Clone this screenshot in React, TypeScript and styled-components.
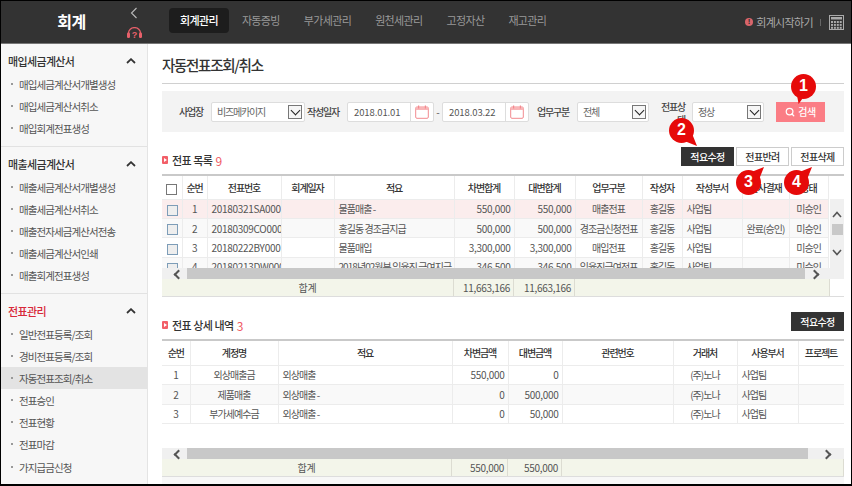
import React from "react";
import styled, { createGlobalStyle } from "styled-components";
import { Search } from "lucide-react";

const GlobalStyle = createGlobalStyle`
  html, body {
    margin: 0;
    padding: 0;
    background: #fff;
  }
  * {
    box-sizing: border-box;
  }
  body {
    font-family: "Noto Sans CJK KR", "Noto Sans", sans-serif;
    font-size: 10px;
    color: #444;
  }
`;

type Align = "left" | "center" | "right";

const sideMenus = [
  {
    title: "매입세금계산서",
    items: ["매입세금계산서개별생성", "매입세금계산서취소", "매입회계전표생성"],
  },
  {
    title: "매출세금계산서",
    items: [
      "매출세금계산서개별생성",
      "매출세금계산서취소",
      "매출전자세금계산서전송",
      "매출세금계산서인쇄",
      "매출회계전표생성",
    ],
  },
  {
    title: "전표관리",
    red: true,
    items: [
      "일반전표등록/조회",
      "경비전표등록/조회",
      "자동전표조회/취소",
      "전표승인",
      "전표현황",
      "전표마감",
      "가지급금신청",
    ],
  },
];

const navItems = ["회계관리", "자동증빙", "부가세관리", "원천세관리", "고정자산", "재고관리"];

const listCols = [20, 25, 74, 53, 120, 60, 61, 67, 40, 60, 47, 39];
const listHead = ["", "순번", "전표번호", "회계일자", "적요", "차변합계", "대변합계", "업무구분", "작성자", "작성부서", "인사결재", "상태"];
const listAlign: Align[] = ["center", "left", "center", "left", "right", "right", "center", "center", "left", "center", "center"];
const listRows = [
  ["1", "20180321SA0001", "", "물품매출 -", "550,000", "550,000", "매출전표", "홍길동", "사업팀", "", "미승인"],
  ["2", "20180309CO0001", "", "홍길동 경조금지급", "500,000", "500,000", "경조금신청전표", "홍길동", "사업팀", "완료(승인)", "미승인"],
  ["3", "20180222BY0001", "", "물품매입", "3,300,000", "3,300,000", "매입전표", "홍길동", "사업팀", "", "미승인"],
  ["4", "20180213DW0001", "", "2018년02월분 임율직 급여지급", "346,500", "346,500", "임율직급여전표", "홍길동", "사업팀", "", "미승인"],
];

const detailCols = [28, 88, 174, 56, 54, 111, 64, 61, 46];
const detailHead = ["순번", "계정명", "적요", "차변금액", "대변금액", "관련번호", "거래처", "사용부서", "프로젝트"];
const detailAlign: Align[] = ["center", "center", "left", "right", "right", "center", "center", "left", "left"];
const detailRows = [
  ["1", "외상매출금", "외상매출", "550,000", "0", "", "(주)노나", "사업팀", ""],
  ["2", "제품매출", "외상매출 -", "0", "500,000", "", "(주)노나", "사업팀", ""],
  ["3", "부가세예수금", "외상매출 -", "0", "50,000", "", "(주)노나", "사업팀", ""],
];

const hasHangul = (value: string) => /[가-힣]/.test(value);

const DateField = ({ value, ml }: { value: string; ml: number }) => (
  <DateWrap $ml={ml}>
    <DateInput>{value}</DateInput>
    <CalendarButton>
      <svg width="14" height="14" viewBox="0 0 14 14">
        <rect x="0.7" y="2" width="12.6" height="11.3" rx="1.2" fill="#fff" stroke="#f28a8f" />
        <rect x="0.7" y="2" width="12.6" height="3" fill="#f9b5b7" />
        <rect x="3" y="0.5" width="1.2" height="3" fill="#f28a8f" />
        <rect x="9.8" y="0.5" width="1.2" height="3" fill="#f28a8f" />
      </svg>
    </CalendarButton>
  </DateWrap>
);

const App = () => {
  return (
    <>
      <GlobalStyle />
      <Page>
        <Header>
          <Brand>회계</Brand>
          <BrandTools>
            <svg width="8" height="12" viewBox="0 0 8 12">
              <path d="M6.5 1 L1.5 6 L6.5 11" fill="none" stroke="#bbb" strokeWidth="1.1" />
            </svg>
            <svg width="15" height="11" viewBox="0 0 15 11">
              <path d="M1.5 7 V6 A6 5.4 0 0 1 13.5 6 V7" fill="none" stroke="#e8606a" strokeWidth="1.3" />
              <rect x="0" y="5.5" width="3" height="5.5" rx="1.2" fill="#e8606a" />
              <rect x="12" y="5.5" width="3" height="5.5" rx="1.2" fill="#e8606a" />
              <text x="7.5" y="10.5" textAnchor="middle" fontSize="9" fontWeight="700" fill="#e8606a" fontFamily="Liberation Sans">?</text>
            </svg>
          </BrandTools>
          <Nav>
            {navItems.map((item, i) => (
              <NavTab key={item} $active={i === 0}>
                {item}
              </NavTab>
            ))}
          </Nav>
          <HeaderRight>
            <AlertDot>!</AlertDot>
            <StartLink>회계시작하기</StartLink>
            <HeaderDivider />
            <svg width="15" height="15" viewBox="0 0 15 15">
              <rect x="0.5" y="0.5" width="14" height="14" fill="none" stroke="#aaa" />
              <rect x="2" y="2" width="11" height="2.5" fill="#aaa" />
              {[0, 1, 2].map((r) =>
                [0, 1, 2, 3].map((c) => (
                  <rect key={`${r}-${c}`} x={2 + c * 2.9} y={6 + r * 2.9} width="2" height="2" fill="#aaa" />
                )),
              )}
            </svg>
          </HeaderRight>
        </Header>

        <Body>
          <Sidebar>
            {sideMenus.map((menu) => (
              <SideSection key={menu.title}>
                <SideTitle $red={menu.red}>
                  {menu.title}
                  <svg width="10" height="6" viewBox="0 0 10 6">
                    <path d="M1 5 L5 1.2 L9 5" fill="none" stroke="#333" strokeWidth="1.8" />
                  </svg>
                </SideTitle>
                {menu.items.map((item) => (
                  <SideItem key={item} $active={item === "자동전표조회/취소"}>
                    {item}
                  </SideItem>
                ))}
              </SideSection>
            ))}
          </Sidebar>

          <Main>
            <PageTitle>자동전표조회/취소</PageTitle>

            <SearchBar>
              <FieldLabel $ml={17}>사업장</FieldLabel>
              <SelectBox $w={94} $ml={8}>
                비즈메카이지
                <SelectArrow />
              </SelectBox>
              <FieldLabel $ml={2}>작성일자</FieldLabel>
              <DateField value="2018.01.01" ml={8} />
              <DateDash>-</DateDash>
              <DateField value="2018.03.22" ml={0} />
              <FieldLabel $ml={8}>업무구분</FieldLabel>
              <SelectBox $w={72} $ml={8}>
                전체
                <SelectArrow />
              </SelectBox>
              <WrappedLabel>전표상태</WrappedLabel>
              <SelectBox $w={72} $ml={7}>
                정상
                <SelectArrow />
              </SelectBox>
              <SearchButton>
                <Search size={10} strokeWidth={3} />
                검색
              </SearchButton>
            </SearchBar>

            <SectionHead>
              <SectionTitle>
                <SectionMark />
                전표 목록 <Count>9</Count>
              </SectionTitle>
              <ButtonRow>
                <ActionButton $dark>적요수정</ActionButton>
                <ActionButton>전표반려</ActionButton>
                <ActionButton>전표삭제</ActionButton>
              </ButtonRow>
            </SectionHead>

            <GridFrame>
              <ListViewport>
                <DataTable $width={666}>
                  <colgroup>
                    {listCols.map((w, i) => (
                      <col key={i} width={w} />
                    ))}
                  </colgroup>
                  <thead>
                    <tr>
                      {listHead.map((h, i) => (
                        <HeadCell key={i} $h={23}>
                          {i === 0 ? <CheckBox /> : h}
                        </HeadCell>
                      ))}
                    </tr>
                  </thead>
                  <tbody>
                    {listRows.map((row, r) => (
                      <BodyRow key={r} $tone={r === 0 ? "picked" : r % 2 ? "odd" : "even"}>
                        <Cell $h={19.4}>
                          <CheckBox $row />
                        </Cell>
                        {row.map((value, c) => (
                          <Cell key={c} $h={19.4} $align={listAlign[c]} $hangul={hasHangul(value)}>
                            {value}
                          </Cell>
                        ))}
                      </BodyRow>
                    ))}
                  </tbody>
                </DataTable>
              </ListViewport>
              <VerticalBar>
                <svg width="10" height="7" viewBox="0 0 10 7">
                  <path d="M1 6 L5 1.5 L9 6" fill="none" stroke="#555" strokeWidth="1.6" />
                </svg>
                <VerticalThumb />
                <svg width="10" height="7" viewBox="0 0 10 7">
                  <path d="M1 1 L5 5.5 L9 1" fill="none" stroke="#555" strokeWidth="1.6" />
                </svg>
              </VerticalBar>
              <HorizontalBar $thumbStop={39} $arrowRight={26} />
            </GridFrame>
            <TotalRow $cols="292px 60px 61px 255px">
              <TotalCell $center>합계</TotalCell>
              <TotalCell>11,663,166</TotalCell>
              <TotalCell>11,663,166</TotalCell>
              <TotalCell />
            </TotalRow>

            <SectionHead>
              <SectionTitle>
                <SectionMark />
                전표 상세 내역 <Count>3</Count>
              </SectionTitle>
              <ButtonRow>
                <ActionButton $dark>적요수정</ActionButton>
              </ButtonRow>
            </SectionHead>

            <DetailViewport>
              <DataTable $width={682}>
                <colgroup>
                  {detailCols.map((w, i) => (
                    <col key={i} width={w} />
                  ))}
                </colgroup>
                <thead>
                  <tr>
                    {detailHead.map((h) => (
                      <HeadCell key={h} $h={24}>
                        {h}
                      </HeadCell>
                    ))}
                  </tr>
                </thead>
                <tbody>
                  {detailRows.map((row, r) => (
                    <BodyRow key={r} $tone={r % 2 ? "odd" : "even"}>
                      {row.map((value, c) => (
                        <Cell key={c} $h={19.6} $align={detailAlign[c]} $hangul={hasHangul(value)}>
                          {value}
                        </Cell>
                      ))}
                    </BodyRow>
                  ))}
                </tbody>
              </DataTable>
            </DetailViewport>
            <HorizontalBar $thumbStop={36} $arrowRight={14} />
            <TotalRow $cols="290px 56px 54px 282px">
              <TotalCell $center>합계</TotalCell>
              <TotalCell>550,000</TotalCell>
              <TotalCell>550,000</TotalCell>
              <TotalCell />
            </TotalRow>
            <BottomStrip />
          </Main>
        </Body>

        <Callout $x={790} $y={73} $tail="bottom">1</Callout>
        <Callout $x={668} $y={117} $tail="downRight">2</Callout>
        <Callout $x={735} $y={169} $tail="upRight">3</Callout>
        <Callout $x={783} $y={169} $tail="upRight">4</Callout>
      </Page>
    </>
  );
};

export default App;

const Page = styled.div`
  position: relative;
  width: 852px;
  height: 486px;
  overflow: hidden;
  background: #fff;
  border: 1px solid #000;
  border-bottom-width: 2px;
  display: flex;
  flex-direction: column;
`;

const Header = styled.header`
  flex: none;
  height: 43px;
  display: flex;
  align-items: center;
  background: #333;
  border-bottom: 1px solid #777;
`;

const Brand = styled.div`
  width: 121px;
  padding-left: 20px;
  margin-top: -2px;
  text-align: center;
  font-size: 16px;
  font-weight: 700;
  color: #fff;
  letter-spacing: -0.5px;
`;

const BrandTools = styled.div`
  width: 24px;
  height: 42px;
  display: flex;
  flex-direction: column;
  align-items: center;
  justify-content: space-between;
  padding: 6px 0 5px;
`;

const Nav = styled.nav`
  display: flex;
  gap: 2px;
  margin: -3px 0 0 23px;
`;

const NavTab = styled.div<{ $active?: boolean }>`
  height: 25px;
  line-height: 24px;
  padding: 0 11px;
  border-radius: 4px;
  font-size: 11px;
  letter-spacing: -0.65px;
  font-weight: ${({ $active }) => ($active ? 500 : 400)};
  color: ${({ $active }) => ($active ? "#fff" : "#999")};
  background: ${({ $active }) => ($active ? "#1d1d1d" : "transparent")};
`;

const HeaderRight = styled.div`
  margin-left: auto;
  padding-right: 7px;
  display: flex;
  align-items: center;
`;

const AlertDot = styled.span`
  width: 8px;
  height: 8px;
  border-radius: 50%;
  background: #d9656b;
  color: #333;
  font-family: "Liberation Sans", sans-serif;
  font-size: 8px;
  font-weight: 700;
  line-height: 8px;
  text-align: center;
`;

const StartLink = styled.span`
  margin-left: 3px;
  font-size: 11px;
  letter-spacing: -0.65px;
  color: #aaa;
`;

const HeaderDivider = styled.span`
  width: 1px;
  height: 7px;
  margin: 0 8px 0 7px;
  background: #666;
`;

const Body = styled.div`
  flex: 1;
  min-height: 0;
  display: flex;
`;

const Sidebar = styled.aside`
  flex: none;
  width: 147px;
  background: #f7f7f7;
  border-right: 1px solid #e4e4e4;
`;

const SideSection = styled.section`
  padding: 6px 0 6px;
  border-bottom: 1px solid #e2e2e2;

  &:last-child {
    border-bottom: 0;
  }
`;

const SideTitle = styled.div<{ $red?: boolean }>`
  height: 22px;
  margin-bottom: 1px;
  padding: 0 11px 0 7px;
  display: flex;
  align-items: center;
  justify-content: space-between;
  font-size: 11px;
  font-weight: 500;
  letter-spacing: -0.65px;
  color: ${({ $red }) => ($red ? "#d8293a" : "#333")};
`;

const SideItem = styled.div<{ $active?: boolean }>`
  position: relative;
  height: 22.2px;
  line-height: 23px;
  padding-left: 18px;
  font-size: 10.5px;
  letter-spacing: -0.9px;
  color: #555;
  background: ${({ $active }) => ($active ? "#e3e3e3" : "transparent")};

  &::before {
    content: "";
    position: absolute;
    left: 10px;
    top: 10px;
    width: 2px;
    height: 2px;
    background: #999;
  }
`;

const Main = styled.main`
  flex: 1;
  min-width: 0;
  padding: 0 7px 0 14px;
  display: flex;
  flex-direction: column;
`;

const PageTitle = styled.h1`
  flex: none;
  height: 40px;
  margin: 0;
  padding-top: 11px;
  font-size: 14.5px;
  line-height: 20px;
  font-weight: 500;
  letter-spacing: -1.3px;
  color: #333;
  border-bottom: 1px solid #d0d0d0;
`;

const SearchBar = styled.div`
  flex: none;
  height: 41px;
  margin-top: 7px;
  display: flex;
  align-items: center;
  background: #f3f3f3;
`;

const FieldLabel = styled.span<{ $ml: number }>`
  margin-left: ${({ $ml }) => $ml}px;
  font-size: 10px;
  font-weight: 500;
  letter-spacing: -1.2px;
  color: #444;
  white-space: nowrap;
`;

const WrappedLabel = styled.span`
  width: 25px;
  margin-left: 11px;
  margin-top: 3px;
  font-size: 10px;
  font-weight: 500;
  line-height: 13px;
  letter-spacing: -1.2px;
  text-align: right;
  color: #444;
  word-break: break-all;
`;

const SelectBox = styled.div<{ $w: number; $ml: number }>`
  position: relative;
  width: ${({ $w }) => $w}px;
  height: 20px;
  margin-left: ${({ $ml }) => $ml}px;
  padding-left: 5px;
  line-height: 18px;
  font-size: 10px;
  letter-spacing: -1.2px;
  color: #666;
  background: #fff;
  border: 1px solid #ddd;
  border-radius: 2px;
`;

const SelectArrow = styled.span`
  position: absolute;
  top: 2px;
  right: 2px;
  width: 14px;
  height: 14px;
  background: #f6f6f6;
  border: 1px solid #777;

  &::after {
    content: "";
    position: absolute;
    top: 1px;
    left: 3px;
    width: 6px;
    height: 6px;
    border-right: 1.5px solid #222;
    border-bottom: 1.5px solid #222;
    transform: rotate(45deg);
  }
`;

const DateWrap = styled.div<{ $ml: number }>`
  display: flex;
  height: 20px;
  margin-left: ${({ $ml }) => $ml}px;
  background: #fff;
  border: 1px solid #ddd;
  border-radius: 2px;
`;

const DateInput = styled.span`
  width: 62px;
  line-height: 19px;
  padding-left: 6px;
  font-size: 9.5px;
  letter-spacing: -0.1px;
  color: #555;
`;

const CalendarButton = styled.span`
  width: 23px;
  display: flex;
  align-items: center;
  justify-content: center;
  border-left: 1px solid #ddd;
`;

const DateDash = styled.span`
  width: 8px;
  text-align: center;
  font-size: 10px;
  color: #555;
`;

const SearchButton = styled.button`
  width: 49px;
  height: 20px;
  margin-left: 12px;
  padding: 0;
  display: flex;
  align-items: center;
  justify-content: center;
  gap: 3px;
  border: 0;
  background: #fb7d85;
  color: #fff;
  font-family: inherit;
  font-size: 10px;
  font-weight: 500;
  letter-spacing: -0.5px;
`;

const SectionHead = styled.div`
  flex: none;
  height: 19px;
  margin-top: 15px;
  display: flex;
  align-items: center;
  justify-content: space-between;
`;

const SectionTitle = styled.div`
  display: flex;
  align-items: center;
  gap: 4px;
  padding-top: 7px;
  font-size: 11px;
  font-weight: 500;
  letter-spacing: -0.5px;
  color: #333;
  white-space: pre;
`;

const SectionMark = styled.span`
  position: relative;
  width: 6px;
  height: 8px;
  border-radius: 1px;
  background: #f25f68;

  &::after {
    content: "";
    position: absolute;
    left: 2px;
    top: 2px;
    border-left: 3px solid #fff;
    border-top: 2px solid transparent;
    border-bottom: 2px solid transparent;
  }
`;

const Count = styled.span`
  margin-left: -3px;
  font-size: 12px;
  color: #ef5a63;
  font-weight: 400;
`;

const ButtonRow = styled.div`
  display: flex;
  gap: 2px;
`;

const ActionButton = styled.button<{ $dark?: boolean }>`
  width: 53px;
  height: 19px;
  padding: 0;
  font-family: inherit;
  font-size: 10px;
  font-weight: 500;
  letter-spacing: -0.6px;
  color: ${({ $dark }) => ($dark ? "#fff" : "#333")};
  background: ${({ $dark }) => ($dark ? "#333" : "#fff")};
  border: 1px solid ${({ $dark }) => ($dark ? "#333" : "#ccc")};
`;

const GridFrame = styled.div`
  flex: none;
  margin-top: 8px;
  display: grid;
  grid-template-columns: 668px 14px;
  grid-template-rows: 92px 11px;
  border-top: 2px solid #c9c9c9;
`;

const ListViewport = styled.div`
  overflow: hidden;
`;

const DetailViewport = styled.div`
  flex: none;
  height: 109px;
  margin-top: 8px;
  overflow: hidden;
  border-top: 2px solid #c9c9c9;
`;

const DataTable = styled.table<{ $width: number }>`
  width: ${({ $width }) => $width}px;
  table-layout: fixed;
  border-collapse: collapse;
`;

const HeadCell = styled.th<{ $h: number }>`
  height: ${({ $h }) => $h}px;
  padding: 0;
  font-size: 10px;
  font-weight: 500;
  letter-spacing: -1.1px;
  color: #333;
  white-space: nowrap;
  overflow: hidden;
  border-right: 1px solid #ececec;
  border-bottom: 1px solid #ececec;
`;

const rowTones = { picked: "#fbeded", odd: "#f9f9f9", even: "#fff" };

const BodyRow = styled.tr<{ $tone: keyof typeof rowTones }>`
  background: ${({ $tone }) => rowTones[$tone]};
`;

const Cell = styled.td<{ $h: number; $align?: Align; $hangul?: boolean }>`
  height: ${({ $h }) => $h}px;
  padding: 0 ${({ $align }) => ($align === "center" ? "0" : "3px 0 4px")};
  font-size: 10px;
  letter-spacing: ${({ $hangul }) => ($hangul ? -0.95 : -0.3)}px;
  color: #555;
  text-align: ${({ $align }) => $align ?? "center"};
  white-space: nowrap;
  overflow: hidden;
  border-right: 1px solid #ececec;
  border-bottom: 1px solid #ececec;
`;

const CheckBox = styled.span<{ $row?: boolean }>`
  display: inline-block;
  width: 11px;
  height: 11px;
  vertical-align: middle;
  background: ${({ $row }) => ($row ? "#eeeeee" : "#fff")};
  border: 1px solid ${({ $row }) => ($row ? "#7d9db8" : "#777")};
`;

const VerticalBar = styled.div`
  margin-top: 23px;
  padding-top: 12px;
  display: flex;
  flex-direction: column;
  align-items: center;
  background: #f0f0f0;
`;

const VerticalThumb = styled.span`
  flex: none;
  width: 11px;
  height: 11px;
  margin: 6px 0 14px;
  background: #c8c8c8;
`;

const HorizontalBar = styled.div<{ $thumbStop: number; $arrowRight: number }>`
  position: relative;
  grid-column: 1 / -1;
  flex: none;
  height: 11px;
  background: linear-gradient(
    to right,
    #f0f0f0 25px,
    #c8c8c8 25px,
    #c8c8c8 calc(100% - ${({ $thumbStop }) => $thumbStop}px),
    #f0f0f0 calc(100% - ${({ $thumbStop }) => $thumbStop}px)
  );

  &::before,
  &::after {
    content: "";
    position: absolute;
    top: 3px;
    width: 5px;
    height: 5px;
    border-left: 2px solid #555;
    border-bottom: 2px solid #555;
  }

  &::before {
    left: 13px;
    transform: rotate(45deg);
  }

  &::after {
    right: ${({ $arrowRight }) => $arrowRight}px;
    transform: rotate(225deg);
  }
`;

const TotalRow = styled.div<{ $cols: string }>`
  flex: none;
  height: 18px;
  display: grid;
  grid-template-columns: ${({ $cols }) => $cols};
  border-bottom: 1px solid #ddd;
`;

const TotalCell = styled.div<{ $center?: boolean }>`
  padding: 0 3px;
  line-height: 17px;
  font-size: 10px;
  letter-spacing: -0.3px;
  color: #555;
  text-align: ${({ $center }) => ($center ? "center" : "right")};
  background: #f3f5ea;
  border-right: 1px solid #dcdcd2;
`;

const BottomStrip = styled.div`
  flex: 1;
  background: #f7f7f7;
`;

const tailShapes = {
  bottom: "left: 6px; bottom: -5px; width: 8px; height: 9px; clip-path: polygon(0 0, 100% 0, 20% 100%);",
  downRight: "right: -3px; bottom: -3px; width: 12px; height: 12px; clip-path: polygon(60% 0, 100% 100%, 0 60%);",
  upRight: "right: -3px; top: -3px; width: 12px; height: 12px; clip-path: polygon(0 40%, 100% 0, 60% 100%);",
};

const Callout = styled.div<{ $x: number; $y: number; $tail: keyof typeof tailShapes }>`
  position: absolute;
  left: ${({ $x }) => $x}px;
  top: ${({ $y }) => $y}px;
  width: 25px;
  height: 25px;
  border-radius: 50%;
  background: #e60a0a;
  color: #fff;
  font-family: "Liberation Sans", sans-serif;
  font-size: 16px;
  font-weight: 700;
  line-height: 24px;
  text-align: center;

  &::after {
    content: "";
    position: absolute;
    background: #e60a0a;
    ${({ $tail }) => tailShapes[$tail]}
  }
`;
